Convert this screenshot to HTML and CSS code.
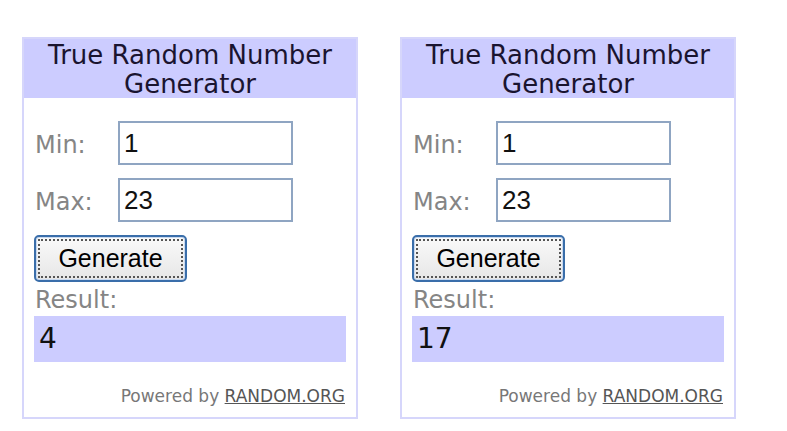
FILE: index.html
```html
<!DOCTYPE html>
<html lang="en">
<head>
  <meta charset="UTF-8">
  <title>True Random Number Generator</title>
  <link rel="stylesheet" href="styles.css">
</head>
<body>
  <div class="page">
    <!-- first widget -->
    <div class="rng">
      <div class="rng-title">True Random Number<br>Generator</div>
      <div class="rng-body">
        <div class="field">
          <label>Min:</label>
          <input type="text" value="1">
        </div>
        <div class="field">
          <label>Max:</label>
          <input type="text" value="23">
        </div>
        <button class="gen-btn">Generate</button>
        <div class="result-label">Result:</div>
        <div class="result">4</div>
        <div class="powered">Powered by <a href="#">RANDOM.ORG</a></div>
      </div>
    </div>

    <!-- second widget -->
    <div class="rng">
      <div class="rng-title">True Random Number<br>Generator</div>
      <div class="rng-body">
        <div class="field">
          <label>Min:</label>
          <input type="text" value="1">
        </div>
        <div class="field">
          <label>Max:</label>
          <input type="text" value="23">
        </div>
        <button class="gen-btn">Generate</button>
        <div class="result-label">Result:</div>
        <div class="result">17</div>
        <div class="powered">Powered by <a href="#">RANDOM.ORG</a></div>
      </div>
    </div>
  </div>
</body>
</html>
```

FILE: styles.css
```css
* {
  margin: 0;
  padding: 0;
  box-sizing: border-box;
}

body {
  background-color: #fff;
  font-family: 'DejaVu Sans', Verdana, sans-serif;
}

.page {
  display: flex;
  gap: 42px;
  padding: 37px 0 0 22px;
}

.rng {
  width: 336px;
  height: 382px;
  border: 2px solid #d6d6fb;
  background-color: #fff;
}

.rng-title {
  background-color: #ccccff;
  color: #1a1430;
  text-align: center;
  font-size: 26px;
  line-height: 29px;
  padding-top: 2px;
  height: 59px;
}

.rng-body {
  padding: 23px 10px 0 10px;
}

.field {
  display: flex;
  align-items: center;
  height: 44px;
  margin-bottom: 13px;
}

.field label {
  width: 84px;
  padding-left: 1px;
  padding-top: 3px;
  font-size: 24px;
  color: #858585;
}

.field input {
  width: 175px;
  height: 44px;
  border: 2px solid #8fa5c2;
  padding: 0 4px;
  font-family: 'Liberation Sans', Arial, sans-serif;
  font-size: 26px;
  color: #111;
  outline: none;
}

.gen-btn {
  display: block;
  margin-top: 1px;
  width: 153px;
  height: 47px;
  border: 2px solid #3a6eaa;
  border-radius: 5px;
  background: linear-gradient(#fafafa, #e6e6e6);
  box-shadow: inset 0 0 0 1px #c9d9ef;
  font-family: 'Liberation Sans', Arial, sans-serif;
  font-size: 25px;
  color: #000;
  outline: 2px dotted #555;
  outline-offset: -6px;
}

.result-label {
  font-size: 24px;
  color: #858585;
  line-height: 32px;
  padding-left: 1px;
  padding-top: 2px;
}

.result {
  background-color: #ccccff;
  height: 46px;
  font-size: 28px;
  line-height: 46px;
  padding-left: 5px;
  color: #111;
}

.powered {
  text-align: right;
  font-size: 17px;
  color: #777;
  margin-top: 24px;
  padding-right: 1px;
}

.powered a {
  color: #555;
}
```
